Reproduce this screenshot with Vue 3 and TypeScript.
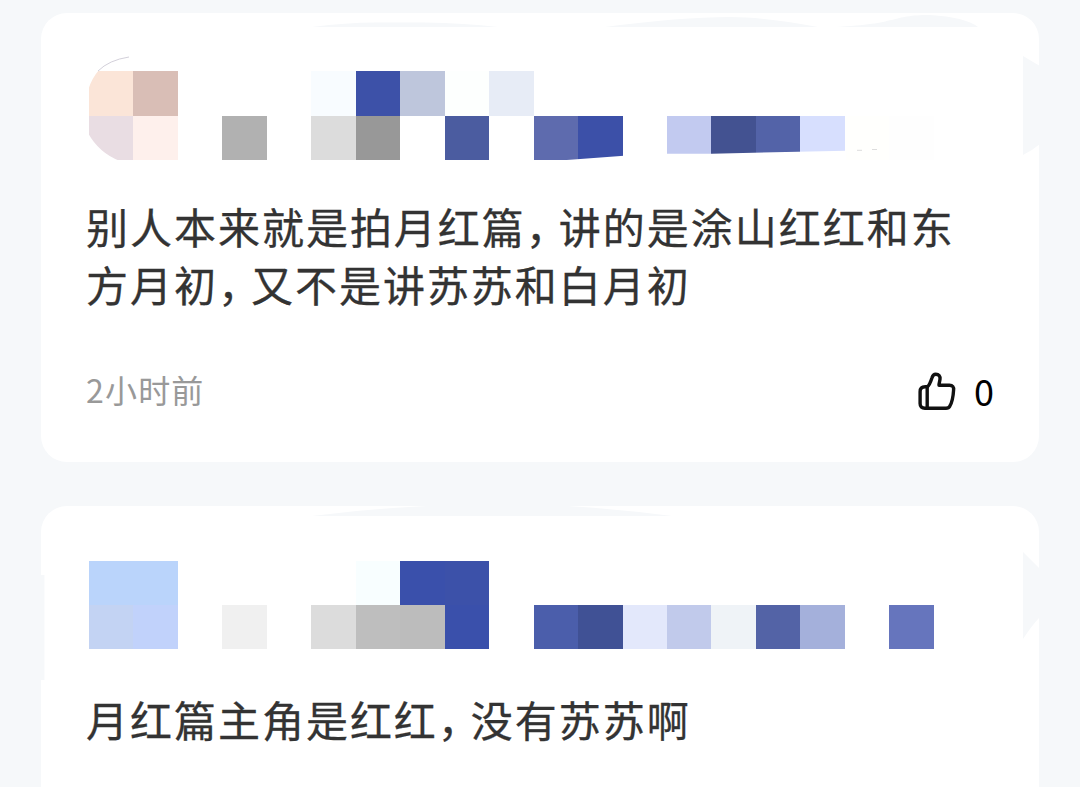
<script setup lang="ts">
interface Tile {
  col: number
  row: number
  color: string
}

interface Comment {
  id: number
  lines: string[][]
  time?: string
  likes?: number
  viewBox: string
  top: number
  tiles: Tile[]
  // background-coloured notches on the card edge
  notches: string[]
  // white shapes which trim the tiles
  trims: string[]
}

const size = 44.47

const comments: Comment[] = [
  {
    id: 1,
    lines: [
      ['别人本来就是拍月红篇', '讲的是涂山红红和东'],
      ['方月初', '又不是讲苏苏和白月初'],
    ],
    time: '2小时前',
    likes: 0,
    viewBox: '41 13 998 180',
    top: 71.2,
    tiles: [
      { col: 0, row: 0, color: '#fbe5d8' },
      { col: 1, row: 0, color: '#d9beb6' },
      { col: 5, row: 0, color: '#f8fcff' },
      { col: 6, row: 0, color: '#3d51a8' },
      { col: 7, row: 0, color: '#bec6dc' },
      { col: 8, row: 0, color: '#fdfffe' },
      { col: 9, row: 0, color: '#e7ecf6' },
      { col: 0, row: 1, color: '#e9dde3' },
      { col: 1, row: 1, color: '#fef0ec' },
      { col: 3, row: 1, color: '#b1b1b1' },
      { col: 5, row: 1, color: '#dcdcdc' },
      { col: 6, row: 1, color: '#989898' },
      { col: 8, row: 1, color: '#4b5ca0' },
      { col: 10, row: 1, color: '#5e6bae' },
      { col: 11, row: 1, color: '#3c50a8' },
      { col: 13, row: 1, color: '#c2caf0' },
      { col: 14, row: 1, color: '#435291' },
      { col: 15, row: 1, color: '#5363a8' },
      { col: 16, row: 1, color: '#d7dffe' },
      { col: 17, row: 1, color: '#fffffd' },
      { col: 18, row: 1, color: '#fefefe' },
    ],
    notches: [
      'M312 27 Q350 22 380 22.5 L425 22.5 Q465 23 498 27Z',
      'M605 27 Q680 17 730 17 Q765 17 818 27Z',
      'M835 27 C900 24 890 15 930 15 Q965 17 978 27Z',
      'M1023 56 L1040 66 V144 Q1032 151 1023 155Z',
    ],
    trims: [
      'M88 70 H99 Q92 78 88.5 89Z',
      'M88 133 Q99 153 120 161 H88Z',
      'M560 160.5 L624 155.8 V162 H560Z',
      'M667 153.7 H712 L846 150.8 V162 H667Z',
    ],
  },
  {
    id: 2,
    lines: [['月红篇主角是红红', '没有苏苏啊']],
    viewBox: '41 506 998 180',
    top: 560.5,
    tiles: [
      { col: 0, row: 0, color: '#bad4fb' },
      { col: 1, row: 0, color: '#bad4fb' },
      { col: 6, row: 0, color: '#f8feff' },
      { col: 7, row: 0, color: '#3a50ab' },
      { col: 8, row: 0, color: '#3c51a9' },
      { col: 0, row: 1, color: '#c3d3f3' },
      { col: 1, row: 1, color: '#c1d2fb' },
      { col: 3, row: 1, color: '#f0f0f0' },
      { col: 5, row: 1, color: '#dcdcdc' },
      { col: 6, row: 1, color: '#bebebe' },
      { col: 7, row: 1, color: '#bcbcbc' },
      { col: 8, row: 1, color: '#3a50ab' },
      { col: 10, row: 1, color: '#4b5eab' },
      { col: 11, row: 1, color: '#405195' },
      { col: 12, row: 1, color: '#e3e8fb' },
      { col: 13, row: 1, color: '#c1caeb' },
      { col: 14, row: 1, color: '#eff3f7' },
      { col: 15, row: 1, color: '#5363a6' },
      { col: 16, row: 1, color: '#a4b0db' },
      { col: 18, row: 1, color: '#6675bd' },
    ],
    notches: [
      'M312 516 Q380 507 455 505 H550 Q610 508 672 516Z',
      'M1023 552 L1040 569 V617 Q1033 624 1023 639Z',
      'M40 575 H44.5 V680 H40Z',
    ],
    trims: [],
  },
]
</script>

<template>
<div class="list">
  <div v-for="item in comments" :key="item.id" class="card">
    <svg class="author" :viewBox="item.viewBox">
      <path v-for="d in item.notches" :key="d" class="notch" :d="d" />
      <rect
        v-for="tile in item.tiles"
        :key="`${tile.col}-${tile.row}`"
        :x="88.9 + tile.col * size"
        :y="item.top + tile.row * size"
        :width="size"
        :height="size"
        :fill="tile.color"
        shape-rendering="crispEdges"
      />
      <path v-for="d in item.trims" :key="d" class="trim" :d="d" />
      <template v-if="item.id === 1">
        <path class="ring" d="M98 71 Q109 60 129 57" />
        <path class="speck" d="M857 150.3h5M872 149.5h5" />
      </template>
    </svg>
    <div class="content">
      <p v-for="(line, i) in item.lines" :key="i">{{ line[0] }}<span class="comma">，</span>{{ line[1] }}</p>
    </div>
    <div v-if="item.time" class="footer">
      <span class="time">{{ item.time }}</span>
      <div class="like">
        <svg class="thumb" viewBox="0 0 38 40">
          <path d="M9.3 15.8 C11.5 14.5 12.8 10.5 14 6.8 C14.7 4.2 15.8 3.2 17.8 3.2 C20.8 3.2 22.4 5.2 22 8.2 C21.8 10.4 21 12 21 14.2 H31.5 C34.6 14.2 35.9 16 35.6 19 C35.2 25.5 34 31.5 31.8 35.2 C31 36.8 30 37.3 28 37.3 H7 C3.8 37.3 2.1 35.6 2.1 32.4 V20.8 C2.1 17.5 4 15.8 7.2 15.8 Z" />
          <path d="M9.2 15.8 V37.3" />
        </svg>
        <span class="count">{{ item.likes }}</span>
      </div>
    </div>
  </div>
</div>
</template>

<style>
body {
  background: #f6f8fa;
}
</style>

<style scoped>
.list {
  display: flex;
  flex-direction: column;
  gap: 44px;
  box-sizing: border-box;
  height: 787px;
  padding: 13px 41px 0;
  overflow: hidden;
  background: #f6f8fa;
  font-family: "Noto Sans CJK SC", sans-serif;
}

.card {
  flex: none;
  height: 449px;
  border-radius: 26px;
  background: white;
}

.author {
  display: block;
  width: 998px;
  height: 180px;
}

.notch {
  fill: #f6f8fa;
}

.trim {
  fill: white;
}

.ring {
  fill: none;
  stroke: #d3d0da;
  stroke-width: 1;
}

.speck {
  stroke: #ddd;
  stroke-width: 1;
}

.content {
  padding: 4px 45px 0;
}

.content p {
  margin: 0;
  color: #333;
  font-size: 42px;
  line-height: 58px;
  letter-spacing: 1.98px;
  white-space: nowrap;
  -webkit-text-stroke: 0.3px #333;
}

.comma {
  letter-spacing: -9px;
}

.footer {
  display: flex;
  align-items: center;
  justify-content: space-between;
  height: 48px;
  margin-top: 52px;
  padding: 0 45px;
}

.time {
  color: #999;
  font-size: 32px;
  letter-spacing: 1.2px;
}

.like {
  display: flex;
  align-items: center;
  gap: 18px;
  padding-top: 4px;
  color: black;
}

.thumb {
  width: 38px;
  height: 40px;
  fill: none;
  stroke: #111;
  stroke-width: 3.4;
  stroke-linejoin: round;
}

.count {
  margin-top: -3px;
  font-size: 36px;
  line-height: 44px;
}
</style>
